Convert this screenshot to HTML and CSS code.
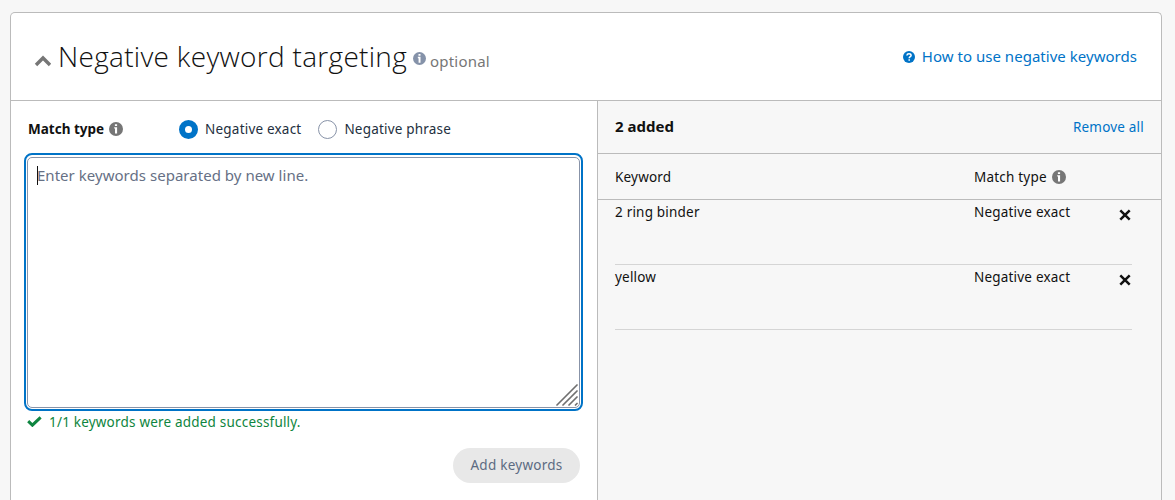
FILE: index.html
```html
<!DOCTYPE html>
<html>
<head>
  <meta charset="UTF-8">
  <title>Negative keyword targeting</title>
  <link rel="stylesheet" href="styles.css">
</head>
<body>
  <svg class="sprite" aria-hidden="true">
    <symbol id="icon-info" viewBox="0 0 14 14">
      <circle cx="7" cy="7" r="7" fill="currentColor"/>
      <path d="M5.900 2.200h2.200v1.900H5.900zM5.200 5.200h2.900v6.300H6V6.600h-.8z" fill="#fff"/>
    </symbol>
    <symbol id="icon-close" viewBox="0 0 12 12">
      <path d="M1.300 1.300l9.400 9.400M10.700 1.300l-9.400 9.400" stroke="currentColor" stroke-width="2.5"/>
    </symbol>
  </svg>

  <div class="card">
    <!-- Card header -->
    <div class="card-header">
      <svg class="chevron" viewBox="0 0 18 12"><path d="M2 10l7-7 7 7" fill="none" stroke="#767676" stroke-width="3.4"/></svg>
      <h1>Negative keyword targeting</h1>
      <svg class="icon-title-info"><use href="#icon-info"/></svg>
      <span class="optional">optional</span>
      <a class="help-link" href="#">
        <svg class="icon-help" viewBox="0 0 12 12"><circle cx="6" cy="6" r="6" fill="currentColor"/><path d="M3.900 4.500C4 3.200 4.900 2.700 6 2.700s2.100.6 2.100 1.700C8.100 5.700 6.200 5.600 6.200 7.200M6.200 8.200v1.500" fill="none" stroke="#fff" stroke-width="1.5"/></svg>
        <span class="help-text">How to use negative keywords</span>
      </a>
    </div>

    <div class="card-body">
      <!-- Keyword entry -->
      <div class="entry">
        <div class="match-type">
          <span class="match-label">Match type</span>
          <svg class="icon-info"><use href="#icon-info"/></svg>
          <label class="option option-exact"><span class="radio radio-checked"></span><span>Negative exact</span></label>
          <label class="option option-phrase"><span class="radio"></span><span>Negative phrase</span></label>
        </div>
        <div class="input-ring">
          <textarea class="keyword-input" placeholder="Enter keywords separated by new line."></textarea>
          <span class="caret"></span>
          <svg class="grip" viewBox="0 0 22 22"><path d="M1 21L21 1M7 21L21 7M13 21l8-8M19.500 21l1.500-1.500" stroke="#707070" stroke-width="1.7" stroke-linecap="round"/></svg>
        </div>
        <div class="success">
          <svg class="check" viewBox="0 0 15 11"><path d="M1.200 5.200l4.200 4L13.600 1.300" fill="none" stroke="currentColor" stroke-width="3"/></svg>
          <span>1/1 keywords were added successfully.</span>
        </div>
        <button class="add-button">Add keywords</button>
      </div>

      <!-- Added keywords -->
      <div class="added">
        <div class="added-header">
          <span class="added-count">2 added</span>
          <a class="remove-all" href="#">Remove all</a>
        </div>
        <div class="columns">
          <span class="col-keyword">Keyword</span>
          <span>Match type</span>
          <svg class="icon-info"><use href="#icon-info"/></svg>
        </div>
        <div class="row">
          <span class="col-keyword">2 ring binder</span>
          <span>Negative exact</span>
          <svg class="close"><use href="#icon-close"/></svg>
        </div>
        <div class="row">
          <span class="col-keyword">yellow</span>
          <span>Negative exact</span>
          <svg class="close"><use href="#icon-close"/></svg>
        </div>
      </div>
    </div>
  </div>
</body>
</html>
```

FILE: styles.css
```css
* {
  box-sizing: border-box;
}

body {
  margin: 0;
  height: 500px;
  padding: 12px 13px 0 10px;
  background-color: #f7f7f7;
  color: #111;
  font-family: "Noto Sans", "Open Sans", sans-serif;
  font-size: 13.5px;
  line-height: 20px;
  letter-spacing: 0.2px;
}

a {
  color: #0073c7;
  text-decoration: none;
}

svg {
  display: block;
  flex: none;
}

span {
  white-space: nowrap;
}

.sprite {
  display: none;
}

.card {
  height: 488px;
  border: 1px solid #bbb;
  border-bottom: none;
  border-radius: 5px 5px 0 0;
  background-color: #fff;
  overflow: hidden;
}

/* Header */
.card-header {
  display: flex;
  align-items: flex-start;
  height: 88px;
  padding: 0 24px 0 23px;
  border-bottom: 1px solid #bbb;
}

.chevron {
  width: 18px;
  height: 12px;
  margin-top: 42px;
}

h1 {
  margin: 23px 0 0 6px;
  font-family: "Open Sans", sans-serif;
  font-size: 28px;
  font-weight: 300;
  line-height: 40px;
  letter-spacing: 0.3px;
  white-space: nowrap;
}

.icon-title-info {
  width: 13px;
  height: 13px;
  margin: 39px 0 0 6px;
  color: #8592a9;
}

.optional {
  margin: 38px 0 0 4px;
  color: #767676;
  font-size: 15px;
  letter-spacing: 0.2px;
}

.help-link {
  display: flex;
  margin: 33px 0 0 auto;
  font-size: 15px;
  letter-spacing: 0.03px;
}

.icon-help {
  width: 12px;
  height: 12px;
  margin: 5px 7px 0 0;
}

.card-body {
  display: flex;
  height: 399px;
}

/* Left column */
.entry {
  width: 586px;
  padding: 18px 14px 0 13px;
}

.match-type {
  display: flex;
  align-items: center;
  height: 20px;
  padding-left: 4px;
}

.match-label {
  font-weight: 700;
  letter-spacing: 0;
}

.icon-info {
  width: 14px;
  height: 14px;
  margin-left: 5px;
  color: #767676;
}

.option {
  display: flex;
  align-items: center;
  gap: 7px;
  color: #232f3e;
}

.option-exact {
  margin-left: 56px;
}

.option-phrase {
  margin-left: 17px;
}

.radio {
  width: 19px;
  height: 19px;
  border: 1px solid #8893a8;
  border-radius: 50%;
  background-color: #fff;
}

.radio-checked {
  border: 6px solid #0073c7;
}

.input-ring {
  position: relative;
  height: 258px;
  margin-top: 14px;
  padding: 2px 1px 1px;
  border: 2px solid #0073c7;
  border-radius: 8px;
}

.keyword-input {
  display: block;
  width: 100%;
  height: 251px;
  padding: 6px 9px;
  border: 1px solid #8893a8;
  border-radius: 5px;
  outline: none;
  resize: none;
  font-family: inherit;
  font-size: 15px;
  line-height: 22px;
  letter-spacing: 0.03px;
}

.keyword-input::placeholder {
  color: #667085;
}

.caret {
  position: absolute;
  top: 11px;
  left: 11px;
  width: 1px;
  height: 19px;
  background-color: #111;
}

.grip {
  position: absolute;
  right: 3px;
  bottom: 3px;
  width: 22px;
  height: 22px;
}

.success {
  display: flex;
  align-items: center;
  gap: 7px;
  height: 20px;
  margin-top: 1px;
  padding-left: 3px;
  color: #0e8540;
}

.check {
  width: 15px;
  height: 11px;
  margin-top: -2px;
}

.add-button {
  display: block;
  width: 127px;
  height: 35px;
  margin: 16px 3px 0 auto;
  padding: 0 0 2px;
  border: none;
  border-radius: 18px;
  background-color: #e8e8e8;
  color: #5c6b82;
  font-family: inherit;
  font-size: 13.5px;
  letter-spacing: 0.25px;
}

/* Right column */
.added {
  flex: 1;
  border-left: 1px solid #bbb;
  background-color: #f7f7f7;
}

.added-header {
  display: flex;
  justify-content: space-between;
  height: 53px;
  padding: 16px 17px 0;
  border-bottom: 1px solid #bbb;
}

.added-count {
  margin-top: -1px;
  font-size: 15px;
  font-weight: 700;
  letter-spacing: 0;
}

.columns {
  display: flex;
  align-items: center;
  height: 46px;
  padding: 0 17px;
  border-bottom: 1px solid #bbb;
}

.col-keyword {
  width: 359px;
}

.row {
  display: flex;
  height: 65px;
  margin: 0 29px 0 17px;
  padding-top: 2px;
  border-bottom: 1px solid #d5d5d5;
}

.close {
  width: 12px;
  height: 12px;
  margin: 7px 1px 0 auto;
}
```
